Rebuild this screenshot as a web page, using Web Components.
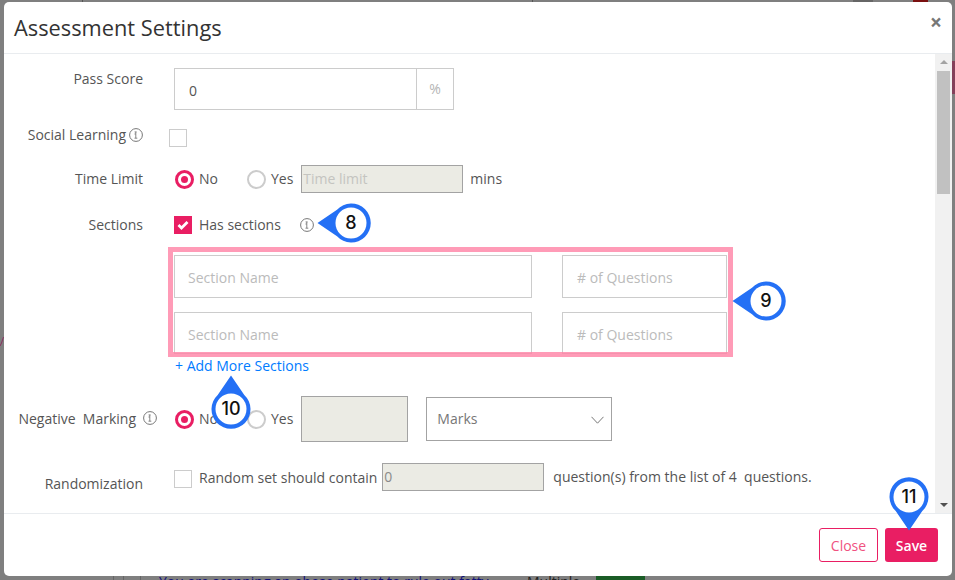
<!DOCTYPE html>
<html><head><meta charset="utf-8">
<style>
html,body{margin:0;height:100%;overflow:hidden;background:#7f7f7f;font-family:"Open Sans",sans-serif}
</style></head><body>
<x-backdrop>
<x-dialog heading="Assessment Settings">
  <x-row label="Pass Score" style="--top:14px;--label-top:1px;--h:42px"><x-addon value="0" unit="%"></x-addon></x-row>
  <x-row label="Social Learning" info style="--top:19px;--h:18px;--label-top:-4px;--shift:-5px"><x-check></x-check></x-row>
  <x-row label="Time Limit" style="--top:18px;--h:28px;--center:1">
    <x-radio checked style="margin-left:1px">No</x-radio><x-radio style="margin-left:29px">Yes</x-radio>
    <x-field style="width:162px;height:28px;margin-left:8px" disabled placeholder="Time limit"></x-field>
    <span style="font-size:14px;color:#555;margin:0 0 2px 7px">mins</span>
  </x-row>
  <x-row label="Sections" style="--top:18px;--h:28px;--center:1">
    <x-check checked>Has sections</x-check><x-info style="margin-left:19px"></x-info>
  </x-row>
  <x-sections>
    <x-section-row></x-section-row>
    <x-section-row style="margin-top:14px;--fh:42px"></x-section-row>
    <a slot="more">+ Add More Sections</a>
  </x-sections>
  <x-row label="Negative  Marking" info style="--top:21px;--h:46px;--center:1;--info-gap:7px;--info-out:-14px">
    <x-radio checked style="margin-left:1px">No</x-radio><x-radio style="margin-left:29px">Yes</x-radio>
    <x-field style="width:107px;height:46px;margin-left:8px" disabled></x-field>
    <x-select style="margin-left:18px">Marks</x-select>
  </x-row>
  <x-row label="Randomization" style="--top:21px;--h:28px;--label-top:11px">
    <x-check style="align-self:flex-start;margin-top:5px">Random set should contain</x-check>
    <x-field style="width:162px;height:28px;margin-left:5px" disabled value="0"></x-field>
    <span style="font-size:14px;color:#555;margin:0 0 2px 9px;white-space:pre">question(s) from the list of 4  questions.</span>
  </x-row>
  <x-button slot="footer" variant="outline">Close</x-button>
  <x-button slot="footer" variant="solid">Save</x-button>
</x-dialog>
<x-outline style="left:168px;top:247px;width:565px;height:110px"></x-outline>
<x-callout dir="left" style="left:351px;top:223px">8</x-callout>
<x-callout dir="left" style="left:766px;top:301px">9</x-callout>
<x-callout dir="up" style="left:231px;top:408.5px">10</x-callout>
<x-callout dir="down" style="left:909px;top:496.500px">11</x-callout>
</x-backdrop>
<script>
function def(name, css, html, init){
  customElements.define(name, class extends HTMLElement{
    constructor(){super();const r=this.attachShadow({mode:'open'});r.innerHTML='<style>'+css+'</style>'+(typeof html==='function'?html(this):html);}
    connectedCallback(){ if(init) init(this,this.shadowRoot); }
  });
}
const A=(e,n,d='')=>e.getAttribute(n)??d;
const infoSvg='<svg class="i" width="14" height="14" viewBox="0 0 14 14" fill="none" stroke="#777"><circle cx="7" cy="7" r="6.4"/><path d="M5.6 3.9h2M6.8 4v6M5.500 10.200h2.800M5.500 6h1.300" stroke-width=".9"/></svg>';

def('x-info',':host{display:inline-flex;width:14px;height:14px;margin-bottom:1px}',infoSvg);

def('x-backdrop',`:host{display:block;position:relative;width:955px;height:580px;overflow:hidden;background:#7f7f7f;box-sizing:border-box;padding:2px 3px 4px 4px}
.bg{position:absolute}
.red{left:913px;top:0;width:15px;height:2px;background:#7a0f0f}
.bump{left:853px;top:0;width:20px;height:2px;background:#666}
.tab{left:952px;top:61px;width:3px;height:33px;background:#84405a}
.q{left:159px;top:575px;font-size:14px;line-height:14px;color:#10107a;white-space:nowrap}
.m{left:527px;top:575px;font-size:14px;line-height:14px;color:#222}
.g{left:596px;top:576px;width:49px;height:4px;background:#1a5c26}
.v{top:576px;width:1px;height:4px;background:#666}
.t{top:0;width:1px;height:2px;background:#555}
.y{left:0;top:337px;width:4px;height:10px}
`,`<div class="bg red"></div><div class="bg bump"></div><div class="bg tab"></div>
<div class="bg t" style="left:82px"></div><div class="bg t" style="left:532px"></div>
<div class="bg v" style="left:113px"></div><div class="bg v" style="left:123px"></div><div class="bg v" style="left:140px"></div>
<svg class="bg y" viewBox="0 0 4 10"><path d="M3.500 0L1.500 6 0 9" fill="none" stroke="#8a3060" stroke-width="1"/></svg>
<div class="bg q">You are scanning an obese patient to rule out fatty</div><div class="bg m">Multiple</div><div class="bg g"></div><slot></slot>`);

def('x-dialog',`:host{display:flex;flex-direction:column;position:relative;width:948px;height:574px;background:#fff;border-radius:5px;overflow:hidden;color:#555;font-family:"Open Sans",sans-serif}
header{height:51px;flex:none;border-bottom:1px solid #e9ecef;display:flex;align-items:center;justify-content:space-between;padding:0 10px;box-sizing:content-box}
h1{margin:0;font-size:21.800px;font-weight:400;color:#333;line-height:50px}
.x{font-size:21px;font-weight:700;color:#777;line-height:20px;margin-top:-11px}
.mid{flex:1;display:flex;min-height:0}
.body{flex:1;overflow:hidden;min-width:0}
.sb{width:17px;flex:none;background:#f1f1f1;display:flex;flex-direction:column;align-items:center;box-sizing:border-box;padding-top:6px}
.up,.dn{width:0;height:0;border-left:4px solid transparent;border-right:4px solid transparent}
.up{border-bottom:4px solid #a3a3a3}
.dn{border-top:4px solid #505050;margin-top:auto;margin-bottom:6px}
.th{width:13px;height:123px;background:#c1c1c1;margin-top:7px}
footer{height:63px;flex:none;border-top:1px solid #e9ecef;display:flex;justify-content:flex-end;align-items:flex-start;gap:7px;padding:14px 14px 0 0;box-sizing:border-box}
`,e=>`<header><h1>${A(e,'heading')}</h1><span class="x">×</span></header>
<div class="mid"><div class="body"><slot></slot></div><div class="sb"><i class="up"></i><i class="th"></i><i class="dn"></i></div></div>
<footer><slot name="footer"></slot></footer>`);

def('x-row',`:host{display:grid;grid-template-columns:139px 1fr;column-gap:31px;margin-top:var(--top,0);min-height:var(--h,0)}
.l{font-size:14px;line-height:19px;color:#555;text-align:right;white-space:pre;display:flex;justify-content:flex-end;align-items:center;gap:var(--info-gap,3px);align-self:start;margin-top:var(--label-top,0);margin-right:var(--info-out,0)}
:host([style*="--center"]) .l{align-self:center;margin-top:0;margin-bottom:2px}
.i{flex:none}
.c{display:flex;align-items:center;height:var(--h,auto);margin-left:var(--shift,0)}
`,e=>`<div class="l"><span>${A(e,'label')}</span>${e.hasAttribute('info')?infoSvg:''}</div><div class="c"><slot></slot></div>`);

def('x-addon',`:host{display:flex;width:280px;height:42px;border:1px solid #ccc;box-sizing:border-box;font-size:14px}
.v{flex:1;padding:2px 0 0 14px;display:flex;align-items:center;color:#555;}
.u{width:37px;border-left:1px solid #ccc;display:flex;align-items:center;justify-content:center;color:#b5b5b5;font-size:14px;padding-bottom:1px;box-sizing:border-box}
`,e=>`<div class="v">${A(e,'value')}</div><div class="u">${A(e,'unit')}</div>`);

def('x-check',`:host{display:inline-flex;align-items:center;font-size:14px;color:#555;white-space:nowrap}
.b{width:18px;height:18px;box-sizing:border-box;border:1px solid #ccc;background:#fff;margin-right:7px;display:flex;align-items:center;justify-content:center}
:host([checked]) .b{background:#e91e63;border-color:#e91e63}
.t{margin-bottom:2px}
`,e=>`<span class="b">${e.hasAttribute('checked')?'<svg width="12" height="10" viewBox="0 0 12 10"><path d="M1.500 5l3 3 6-6" fill="none" stroke="#fff" stroke-width="2.800"/></svg>':''}</span><span class="t"><slot></slot></span>`);

def('x-radio',`:host{display:inline-flex;align-items:center;font-size:14px;color:#555}
.o{width:19px;height:19px;border-radius:50%;box-sizing:border-box;border:2px solid #ccc;background:#fff;margin-right:5px;display:flex;align-items:center;justify-content:center}
:host([checked]) .o{border:3px solid #e91e63}
:host([checked]) .o::after{content:"";width:7px;height:7px;border-radius:50%;background:#e91e63}
.t{margin-bottom:2px}
`,`<span class="o"></span><span class="t"><slot></slot></span>`);

def('x-field',`:host{display:inline-flex;align-items:center;box-sizing:border-box;border:1px solid #ccc;background:#fff;font-size:14px;color:#bbb;padding:2px 13px 0;white-space:nowrap}
:host([disabled]){background:#ebebe4;border-color:#a3a3a3;padding:0 1px 2px;color:#8a8a8a}
:host([disabled][placeholder]){color:#c4c4c0}
`,e=>`${A(e,'placeholder')||A(e,'value')}`);

def('x-select',`:host{display:inline-flex;align-items:center;justify-content:space-between;width:186px;height:44px;box-sizing:border-box;border:1px solid #a3a3a3;background:#fff;font-size:14px;color:#777;padding:0 7px 2px 10px}
svg{margin-top:4px}`,`<slot></slot><svg width="13" height="8" viewBox="0 0 13 8"><path d="M.5.8L6.500 7.200 12.500.8" fill="none" stroke="#777"/></svg>`);

def('x-sections',`:host{display:block;margin:16px 0 0 170px}
.more{font-size:14px;line-height:19px;margin:2px 0 0 1px;color:#007bff}
`,`<slot></slot><div class="more"><slot name="more"></slot></div>`);

def('x-section-row',`:host{display:flex;gap:30px}
x-field{height:var(--fh,43px)}
`,`<x-field style="width:358px" placeholder="Section Name"></x-field><x-field style="width:165px;padding-left:14px" placeholder="# of Questions"></x-field>`);

def('x-button',`:host{display:inline-flex;align-items:center;justify-content:center;height:34px;border-radius:3px;box-sizing:border-box;font-size:14px;padding:0 12px}
:host([variant=outline]){width:59px;border:1px solid #e91e63;color:#f0527f;background:#fff}
:host([variant=solid]){width:53px;background:#e91e63;color:#fff;font-weight:600}
`,`<slot></slot>`);

def('x-outline',`:host{position:absolute;box-sizing:border-box;border:5px solid rgba(255,130,165,.8);display:block;pointer-events:none}`,'');

const rot={left:0,up:90,right:180,down:270};
def('x-callout',`:host{position:absolute;width:0;height:0;display:block}
svg{position:absolute;left:-40px;top:-40px;overflow:visible}
.n{position:absolute;left:-20px;top:-12px;width:40px;height:24px;line-height:24px;text-align:center;font-family:Inter,sans-serif;font-size:18px;font-weight:500;color:#111}
`,e=>`<svg width="80" height="80" viewBox="-40 -40 80 80"><g transform="rotate(${rot[A(e,'dir','left')]})"><path d="M-33.500 0L-14 -13.300A19.500 19.500 0 1 1 -14 13.300Z" fill="#2470f5"/><circle r="15.500" fill="#fff"/></g></svg><div class="n"><slot></slot></div>`);
</script>
</body></html>
